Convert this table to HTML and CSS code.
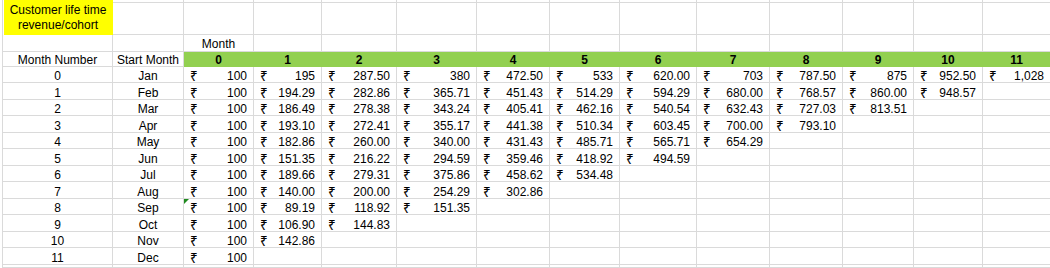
FILE: index.html
```html
<!DOCTYPE html>
<html lang="en">
<head>
<meta charset="utf-8">
<title>Customer life time revenue/cohort</title>
<link rel="stylesheet" href="styles.css">
</head>
<body>
<div class="sheet">
  <!-- spacer row + title -->
  <div class="c title">Customer life time<br>revenue/cohort</div>
  <div class="c"></div><div class="c"></div><div class="c"></div><div class="c"></div><div class="c"></div><div class="c"></div><div class="c"></div><div class="c"></div><div class="c"></div><div class="c"></div><div class="c"></div><div class="c"></div><div class="c"></div>
  <div class="c"></div><div class="c"></div><div class="c"></div><div class="c"></div><div class="c"></div><div class="c"></div><div class="c"></div><div class="c"></div><div class="c"></div><div class="c"></div><div class="c"></div><div class="c"></div><div class="c"></div>

  <!-- Month label row -->
  <div class="c"></div><div class="c"></div><div class="c mid ctr">Month</div>
  <div class="c"></div><div class="c"></div><div class="c"></div><div class="c"></div><div class="c"></div><div class="c"></div><div class="c"></div><div class="c"></div><div class="c"></div><div class="c"></div><div class="c"></div>

  <!-- header row -->
  <div class="c ctr">Month Number</div><div class="c ctr">Start Month</div>
  <div class="c hd">0</div><div class="c hd">1</div><div class="c hd">2</div><div class="c hd">3</div><div class="c hd">4</div><div class="c hd">5</div><div class="c hd">6</div><div class="c hd">7</div><div class="c hd">8</div><div class="c hd">9</div><div class="c hd">10</div><div class="c hd">11</div>

  <!-- 0 Jan -->
  <div class="c ctr">0</div><div class="c ctr">Jan</div>
  <div class="c v"><span class="r">₹</span><span>100</span></div>
  <div class="c v"><span class="r">₹</span><span>195</span></div>
  <div class="c v"><span class="r">₹</span><span>287.50</span></div>
  <div class="c v"><span class="r">₹</span><span>380</span></div>
  <div class="c v"><span class="r">₹</span><span>472.50</span></div>
  <div class="c v"><span class="r">₹</span><span>533</span></div>
  <div class="c v"><span class="r">₹</span><span>620.00</span></div>
  <div class="c v"><span class="r">₹</span><span>703</span></div>
  <div class="c v"><span class="r">₹</span><span>787.50</span></div>
  <div class="c v"><span class="r">₹</span><span>875</span></div>
  <div class="c v"><span class="r">₹</span><span>952.50</span></div>
  <div class="c v"><span class="r">₹</span><span>1,028</span></div>

  <!-- 1 Feb -->
  <div class="c ctr">1</div><div class="c ctr">Feb</div>
  <div class="c v"><span class="r">₹</span><span>100</span></div>
  <div class="c v"><span class="r">₹</span><span>194.29</span></div>
  <div class="c v"><span class="r">₹</span><span>282.86</span></div>
  <div class="c v"><span class="r">₹</span><span>365.71</span></div>
  <div class="c v"><span class="r">₹</span><span>451.43</span></div>
  <div class="c v"><span class="r">₹</span><span>514.29</span></div>
  <div class="c v"><span class="r">₹</span><span>594.29</span></div>
  <div class="c v"><span class="r">₹</span><span>680.00</span></div>
  <div class="c v"><span class="r">₹</span><span>768.57</span></div>
  <div class="c v"><span class="r">₹</span><span>860.00</span></div>
  <div class="c v"><span class="r">₹</span><span>948.57</span></div>
  <div class="c"></div>

  <!-- 2 Mar -->
  <div class="c ctr">2</div><div class="c ctr">Mar</div>
  <div class="c v"><span class="r">₹</span><span>100</span></div>
  <div class="c v"><span class="r">₹</span><span>186.49</span></div>
  <div class="c v"><span class="r">₹</span><span>278.38</span></div>
  <div class="c v"><span class="r">₹</span><span>343.24</span></div>
  <div class="c v"><span class="r">₹</span><span>405.41</span></div>
  <div class="c v"><span class="r">₹</span><span>462.16</span></div>
  <div class="c v"><span class="r">₹</span><span>540.54</span></div>
  <div class="c v"><span class="r">₹</span><span>632.43</span></div>
  <div class="c v"><span class="r">₹</span><span>727.03</span></div>
  <div class="c v"><span class="r">₹</span><span>813.51</span></div>
  <div class="c"></div><div class="c"></div>

  <!-- 3 Apr -->
  <div class="c ctr">3</div><div class="c ctr">Apr</div>
  <div class="c v"><span class="r">₹</span><span>100</span></div>
  <div class="c v"><span class="r">₹</span><span>193.10</span></div>
  <div class="c v"><span class="r">₹</span><span>272.41</span></div>
  <div class="c v"><span class="r">₹</span><span>355.17</span></div>
  <div class="c v"><span class="r">₹</span><span>441.38</span></div>
  <div class="c v"><span class="r">₹</span><span>510.34</span></div>
  <div class="c v"><span class="r">₹</span><span>603.45</span></div>
  <div class="c v"><span class="r">₹</span><span>700.00</span></div>
  <div class="c v"><span class="r">₹</span><span>793.10</span></div>
  <div class="c"></div><div class="c"></div><div class="c"></div>

  <!-- 4 May -->
  <div class="c ctr">4</div><div class="c ctr">May</div>
  <div class="c v"><span class="r">₹</span><span>100</span></div>
  <div class="c v"><span class="r">₹</span><span>182.86</span></div>
  <div class="c v"><span class="r">₹</span><span>260.00</span></div>
  <div class="c v"><span class="r">₹</span><span>340.00</span></div>
  <div class="c v"><span class="r">₹</span><span>431.43</span></div>
  <div class="c v"><span class="r">₹</span><span>485.71</span></div>
  <div class="c v"><span class="r">₹</span><span>565.71</span></div>
  <div class="c v"><span class="r">₹</span><span>654.29</span></div>
  <div class="c"></div><div class="c"></div><div class="c"></div><div class="c"></div>

  <!-- 5 Jun -->
  <div class="c ctr">5</div><div class="c ctr">Jun</div>
  <div class="c v"><span class="r">₹</span><span>100</span></div>
  <div class="c v"><span class="r">₹</span><span>151.35</span></div>
  <div class="c v"><span class="r">₹</span><span>216.22</span></div>
  <div class="c v"><span class="r">₹</span><span>294.59</span></div>
  <div class="c v"><span class="r">₹</span><span>359.46</span></div>
  <div class="c v"><span class="r">₹</span><span>418.92</span></div>
  <div class="c v"><span class="r">₹</span><span>494.59</span></div>
  <div class="c"></div><div class="c"></div><div class="c"></div><div class="c"></div><div class="c"></div>

  <!-- 6 Jul -->
  <div class="c ctr">6</div><div class="c ctr">Jul</div>
  <div class="c v"><span class="r">₹</span><span>100</span></div>
  <div class="c v"><span class="r">₹</span><span>189.66</span></div>
  <div class="c v"><span class="r">₹</span><span>279.31</span></div>
  <div class="c v"><span class="r">₹</span><span>375.86</span></div>
  <div class="c v"><span class="r">₹</span><span>458.62</span></div>
  <div class="c v"><span class="r">₹</span><span>534.48</span></div>
  <div class="c"></div><div class="c"></div><div class="c"></div><div class="c"></div><div class="c"></div><div class="c"></div>

  <!-- 7 Aug -->
  <div class="c ctr">7</div><div class="c ctr">Aug</div>
  <div class="c v"><span class="r">₹</span><span>100</span></div>
  <div class="c v"><span class="r">₹</span><span>140.00</span></div>
  <div class="c v"><span class="r">₹</span><span>200.00</span></div>
  <div class="c v"><span class="r">₹</span><span>254.29</span></div>
  <div class="c v"><span class="r">₹</span><span>302.86</span></div>
  <div class="c"></div><div class="c"></div><div class="c"></div><div class="c"></div><div class="c"></div><div class="c"></div><div class="c"></div>

  <!-- 8 Sep -->
  <div class="c ctr">8</div><div class="c ctr">Sep</div>
  <div class="c v flag"><span class="r">₹</span><span>100</span></div>
  <div class="c v"><span class="r">₹</span><span>89.19</span></div>
  <div class="c v"><span class="r">₹</span><span>118.92</span></div>
  <div class="c v"><span class="r">₹</span><span>151.35</span></div>
  <div class="c"></div><div class="c"></div><div class="c"></div><div class="c"></div><div class="c"></div><div class="c"></div><div class="c"></div><div class="c"></div>

  <!-- 9 Oct -->
  <div class="c ctr">9</div><div class="c ctr">Oct</div>
  <div class="c v"><span class="r">₹</span><span>100</span></div>
  <div class="c v"><span class="r">₹</span><span>106.90</span></div>
  <div class="c v"><span class="r">₹</span><span>144.83</span></div>
  <div class="c"></div><div class="c"></div><div class="c"></div><div class="c"></div><div class="c"></div><div class="c"></div><div class="c"></div><div class="c"></div><div class="c"></div>

  <!-- 10 Nov -->
  <div class="c ctr">10</div><div class="c ctr">Nov</div>
  <div class="c v"><span class="r">₹</span><span>100</span></div>
  <div class="c v"><span class="r">₹</span><span>142.86</span></div>
  <div class="c"></div><div class="c"></div><div class="c"></div><div class="c"></div><div class="c"></div><div class="c"></div><div class="c"></div><div class="c"></div><div class="c"></div><div class="c"></div>

  <!-- 11 Dec -->
  <div class="c ctr">11</div><div class="c ctr">Dec</div>
  <div class="c v"><span class="r">₹</span><span>100</span></div>
  <div class="c"></div><div class="c"></div><div class="c"></div><div class="c"></div><div class="c"></div><div class="c"></div><div class="c"></div><div class="c"></div><div class="c"></div><div class="c"></div><div class="c"></div>

  <!-- trailing empty row -->
  <div class="c"></div><div class="c"></div><div class="c"></div><div class="c"></div><div class="c"></div><div class="c"></div><div class="c"></div><div class="c"></div><div class="c"></div><div class="c"></div><div class="c"></div><div class="c"></div><div class="c"></div><div class="c"></div>
</div>
</body>
</html>
```
FILE: styles.css
```css
html, body {
  margin: 0;
  padding: 0;
  background: #ffffff;
  overflow: hidden;
}

.sheet {
  display: grid;
  grid-template-columns: 110px 71px 70px 68px 75px 80px 73px 70px 77px 73px 73px 71px 69px 68px;
  grid-template-rows: 3px 32px 17px 15px 16px 17px 16px 17px 16px 17px 16px 17px 16px 17px 16px 17px 3px;
  margin-left: 2px;
  border-left: 1px solid #dadada;
  font-family: "Liberation Sans", Arial, sans-serif;
  font-size: 12px;
  color: #000000;
}

.c {
  box-sizing: border-box;
  border-right: 1px solid #dadada;
  border-bottom: 1px solid #dadada;
  display: flex;
  align-items: flex-end;
  line-height: 11px;
  white-space: nowrap;
  min-width: 0;
}

.title {
  grid-row: 1 / span 2;
  background: #ffff00;
  border-color: #ffff00;
  margin-left: 1px;
  flex-direction: column;
  justify-content: center;
  align-items: center;
  line-height: 15px;
  padding-top: 2px;
  text-align: center;
}

.ctr {
  justify-content: center;
}

.mid {
  align-items: center;
  line-height: 14px;
  padding-top: 1px;
}

.hd {
  background: #92d050;
  border-color: #92d050;
  justify-content: center;
  font-weight: bold;
}

.v {
  justify-content: space-between;
  padding: 0 6px 0 6px;
}

.r {
  font-family: "Noto Sans", "DejaVu Sans", sans-serif;
  font-size: 13.5px;
  line-height: 11px;
}

.flag {
  position: relative;
}

.flag::before {
  content: "";
  position: absolute;
  left: 0;
  top: 0;
  width: 0;
  height: 0;
  border-top: 5px solid #1f8a1f;
  border-right: 5px solid transparent;
}
```
